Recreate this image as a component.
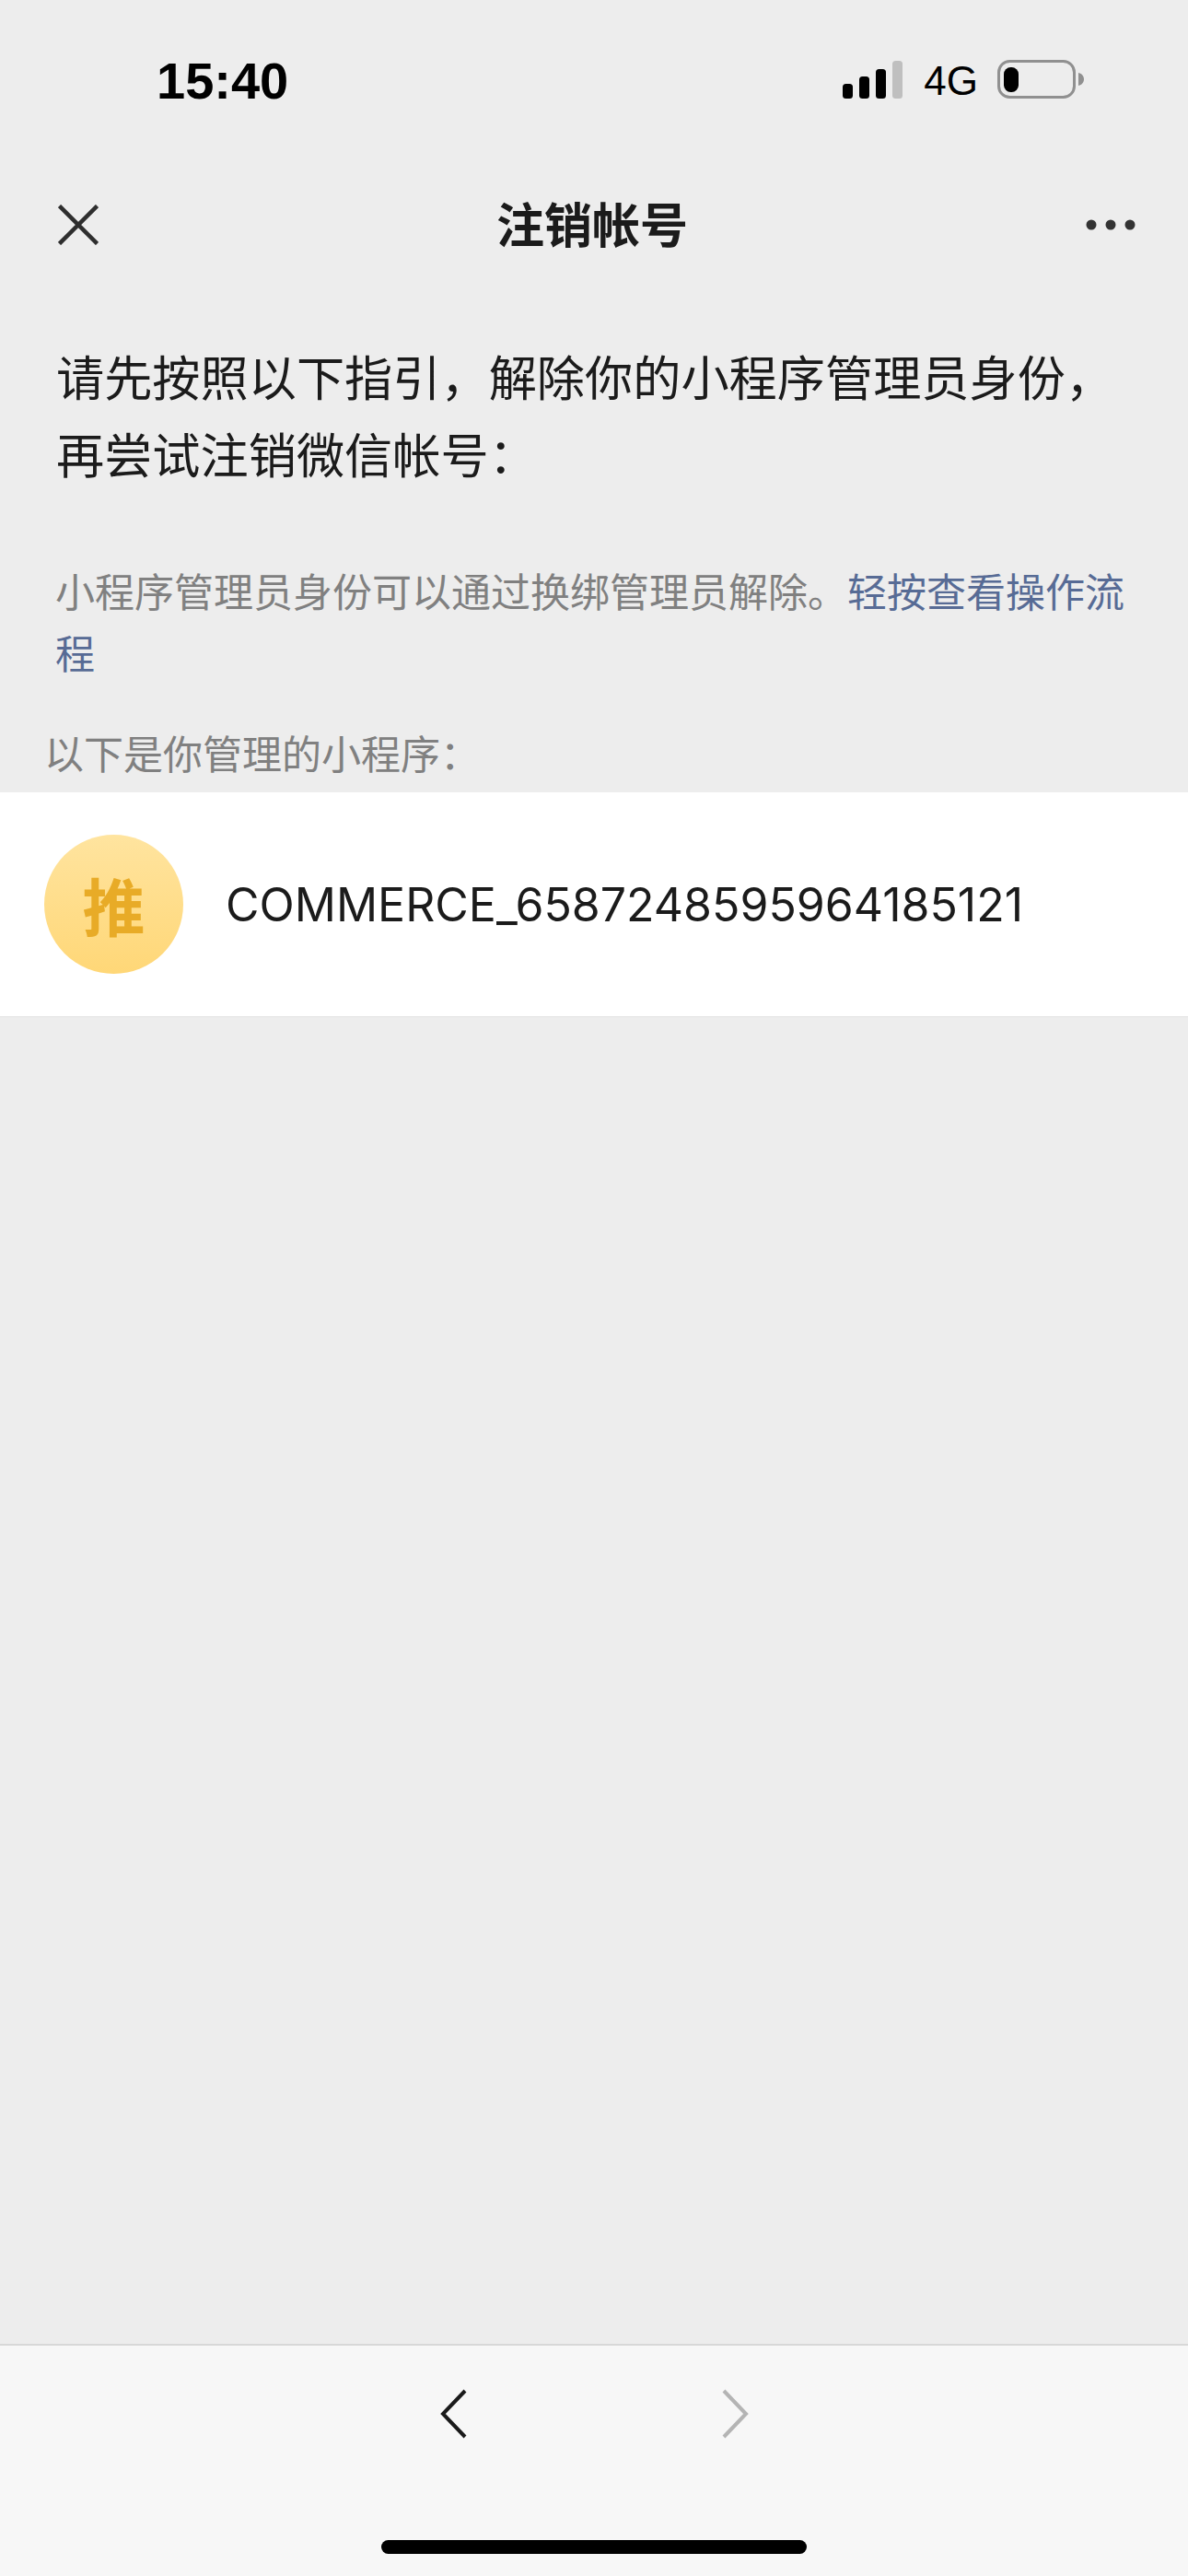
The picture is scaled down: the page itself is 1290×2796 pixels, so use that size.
<div class="page">
  <header class="status">
    <span class="time">15:40</span>
    <div class="status-right">
      <svg class="signal" width="65" height="42" viewBox="0 0 65 42" aria-hidden="true">
        <rect x="0" y="25" width="11" height="16" rx="3.5" fill="#000" />
        <rect x="18" y="17" width="11" height="24" rx="3.5" fill="#000" />
        <rect x="36" y="9" width="11" height="32" rx="3.5" fill="#000" />
        <rect x="54" y="0" width="11" height="41" rx="3.5" fill="#bfbfbf" />
      </svg>
      <span class="net">4G</span>
      <svg class="battery" width="95" height="43" viewBox="0 0 95 43" aria-hidden="true">
        <rect x="1.5" y="1.5" width="82" height="39" rx="12" fill="none" stroke="#909090" stroke-width="3" />
        <rect x="7" y="8" width="16" height="27" rx="7.5" fill="#000" />
        <path d="M88 14 C92 15 94 18 94 21 C94 24 92 27 88 28 Z" fill="#909090" />
      </svg>
    </div>
  </header>

  <nav class="nav">
    <svg class="close" width="44" height="44" viewBox="0 0 44 44" aria-hidden="true">
      <path d="M1.5 1.5 L42.5 42.5 M42.5 1.5 L1.5 42.5" stroke="#2e2e2e" stroke-width="4.5" fill="none" />
    </svg>
    <h1>注销帐号</h1>
    <svg class="more" width="54" height="12" viewBox="0 0 54 12" aria-hidden="true">
      <circle cx="6" cy="6" r="5.5" fill="#333" />
      <circle cx="27" cy="6" r="5.5" fill="#333" />
      <circle cx="48" cy="6" r="5.5" fill="#333" />
    </svg>
  </nav>

  <p class="lead">请先按照以下指引，解除你的小程序管理员身份，再尝试注销微信帐号：</p>
  <p class="hint">小程序管理员身份可以通过换绑管理员解除。<span class="link">轻按查看操作流</span><span class="link">程</span></p>
  <p class="section">以下是你管理的小程序：</p>

  <div class="row">
    <div class="avatar">推</div>
    <span class="name">COMMERCE_6587248595964185121</span>
  </div>

  <div class="spacer"></div>

  <footer class="toolbar">
    <div class="arrows">
      <svg width="30" height="54" viewBox="0 0 30 54" aria-hidden="true">
        <path d="M27 2 L3 27 L27 52" fill="none" stroke="#1a1a1a" stroke-width="4" />
      </svg>
      <svg width="30" height="54" viewBox="0 0 30 54" aria-hidden="true">
        <path d="M3 2 L27 27 L3 52" fill="none" stroke="#b4b4b4" stroke-width="4" />
      </svg>
    </div>
    <div class="home"></div>
  </footer>
</div>

<style>
  :global(body) {
    margin: 0;
    background: #ededed;
  }

  .page {
    width: 1290px;
    height: 2796px;
    display: flex;
    flex-direction: column;
    background: #ededed;
    font-family: "Inter", "Noto Sans CJK SC", sans-serif;
    color: #1b1b1b;
  }

  .status {
    height: 176px;
    box-sizing: border-box;
    padding: 56px 112px 0 170px;
    display: flex;
    justify-content: space-between;
    align-items: flex-start;
  }

  .time {
    font-family: "Liberation Sans", sans-serif;
    font-weight: 700;
    font-size: 56px;
    line-height: 64px;
    color: #000;
  }

  .status-right {
    display: flex;
    align-items: flex-start;
    padding-top: 9px;
  }

  .signal {
    margin-top: 1px;
  }

  .net {
    font-family: "Liberation Sans", sans-serif;
    font-size: 44px;
    line-height: 44px;
    margin: 1px 21px 0 23px;
    color: #000;
  }

  .nav {
    height: 136px;
    box-sizing: border-box;
    padding: 0 57px 0 63px;
    display: flex;
    align-items: center;
    justify-content: space-between;
    position: relative;
  }

  .nav h1 {
    position: absolute;
    left: 0;
    right: 0;
    top: 0;
    margin: 0;
    text-align: center;
    font-size: 52px;
    font-weight: 700;
    line-height: 132px;
    font-family: "Noto Sans CJK SC", sans-serif;
    transform: translateX(-2px);
  }

  .lead {
    margin: 53px 0 0;
    padding: 0 61px;
    font-size: 52.2px;
    line-height: 84px;
    font-family: "Noto Sans CJK SC", sans-serif;
  }

  .hint {
    margin: 74px 0 0;
    padding: 0 60px;
    font-size: 43px;
    line-height: 67px;
    color: #808080;
    font-family: "Noto Sans CJK SC", sans-serif;
  }

  .link {
    color: #576b95;
  }

  .section {
    margin: 0 0 10px;
    padding: 42px 48px 0;
    height: 67px;
    font-size: 43px;
    line-height: 67px;
    color: #808080;
    font-family: "Noto Sans CJK SC", sans-serif;
  }

  .row {
    height: 244px;
    box-sizing: border-box;
    background: #fff;
    border-bottom: 1px solid #e3e3e3;
    display: flex;
    align-items: center;
    padding: 0 0 0 48px;
  }

  .avatar {
    width: 151px;
    height: 151px;
    border-radius: 50%;
    background: linear-gradient(180deg, #ffe49f 0%, #ffd777 100%);
    color: #e8ab27;
    font-family: "Noto Sans CJK SC", sans-serif;
    font-weight: 700;
    font-size: 68px;
    display: flex;
    align-items: center;
    justify-content: center;
  }

  .name {
    margin-left: 46px;
    font-size: 50px;
    color: #1b1b1b;
  }

  .spacer {
    flex: 1;
  }

  .toolbar {
    height: 252px;
    box-sizing: border-box;
    background: #f7f7f7;
    border-top: 2px solid #d8d8d8;
    position: relative;
  }

  .arrows {
    display: flex;
    justify-content: center;
    gap: 275px;
    padding-top: 47px;
  }

  .home {
    position: absolute;
    left: 414px;
    top: 211px;
    width: 462px;
    height: 15px;
    border-radius: 8px;
    background: #000;
  }
</style>
